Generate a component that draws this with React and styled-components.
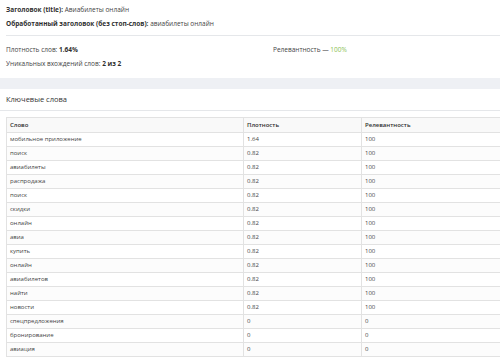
import React from 'react';
import styled, { createGlobalStyle } from 'styled-components';

const GlobalStyle = createGlobalStyle`
  html, body {
    margin: 0;
    padding: 0;
    background: #ffffff;
    overflow: hidden;
  }
  body {
    font-family: 'Open Sans', 'Liberation Sans', sans-serif;
    color: #444;
  }
`;

const Page = styled.div`
  width: 100%;
  overflow: hidden;
  background: #eef0f4;
`;

const Card = styled.section`
  background: #ffffff;
`;

const InfoBlock = styled.div`
  padding: 3px 6px 0;
  font-size: 6.5px;
  line-height: 13.5px;
`;

const Line = styled.div`
  color: #444;
  & b {
    color: #2f2f2f;
    font-weight: 700;
  }
`;

const Divider = styled.hr`
  margin: 5px -6px 6px 0;
  border: 0;
  border-top: 1px solid #e5e7ea;
`;

const Stats = styled.div`
  display: grid;
  grid-template-columns: 267px 1fr;
  padding-top: 1px;
  padding-bottom: 8px;
`;

const Green = styled.span`
  color: #8cc152;
`;

const Gap = styled.div`
  height: 11px;
`;

const CardTitle = styled.h3`
  margin: 0;
  padding: 5px 6px 5px;
  font-size: 7.5px;
  line-height: 11px;
  font-weight: 400;
  color: #333;
  border-bottom: 1px solid #e5e7ea;
`;

const TableWrap = styled.div`
  padding: 6px 0 0 6px;
  overflow: hidden;
`;

const Table = styled.table`
  width: 534px;
  border-collapse: collapse;
  font-size: 6px;
  color: #444;
`;

const Th = styled.th`
  text-align: left;
  font-weight: 600;
  color: #2f2f2f;
  padding: 0 3px;
  height: 14px;
  line-height: 14px;
  border: 1px solid #e2e2e2;
  background: #f9f9f9;
`;

const Tr = styled.tr`
  background: ${(p) => (p.$odd ? '#fcfcfc' : '#ffffff')};
`;

const Td = styled.td`
  padding: 0 3px;
  height: 13px;
  line-height: 13px;
  border: 1px solid #e2e2e2;
  white-space: nowrap;
`;

const rows = [
  ['мобильное приложение', '1.64', '100'],
  ['поиск', '0.82', '100'],
  ['авиабилеты', '0.82', '100'],
  ['распродажа', '0.82', '100'],
  ['поиск', '0.82', '100'],
  ['скидки', '0.82', '100'],
  ['онлайн', '0.82', '100'],
  ['авиа', '0.82', '100'],
  ['купить', '0.82', '100'],
  ['онлайн', '0.82', '100'],
  ['авиабилетов', '0.82', '100'],
  ['найти', '0.82', '100'],
  ['новости', '0.82', '100'],
  ['спецпредложения', '0', '0'],
  ['бронирование', '0', '0'],
  ['авиация', '0', '0'],
];

export default function App() {
  return (
    <>
      <GlobalStyle />
      <Page>
        <Card>
          <InfoBlock>
            <Line>
              <b>Заголовок (title):</b> Авиабилеты онлайн
            </Line>
            <Line>
              <b>Обработанный заголовок (без стоп-слов):</b> авиабилеты онлайн
            </Line>
            <Divider />
            <Stats>
              <div>
                <Line>
                  Плотность слов: <b>1.64%</b>
                </Line>
                <Line>
                  Уникальных вхождений слов: <b>2 из 2</b>
                </Line>
              </div>
              <Line>
                Релевантность — <Green>100%</Green>
              </Line>
            </Stats>
          </InfoBlock>
        </Card>
        <Gap />
        <Card>
          <CardTitle>Ключевые слова</CardTitle>
          <TableWrap>
            <Table>
              <colgroup>
                <col style={{ width: 237 }} />
                <col style={{ width: 118 }} />
                <col />
              </colgroup>
              <thead>
                <tr>
                  <Th>Слово</Th>
                  <Th>Плотность</Th>
                  <Th>Релевантность</Th>
                </tr>
              </thead>
              <tbody>
                {rows.map(([word, density, rel], i) => (
                  <Tr key={i} $odd={i % 2 === 1}>
                    <Td>{word}</Td>
                    <Td>{density}</Td>
                    <Td>{rel}</Td>
                  </Tr>
                ))}
              </tbody>
            </Table>
          </TableWrap>
        </Card>
      </Page>
    </>
  );
}
